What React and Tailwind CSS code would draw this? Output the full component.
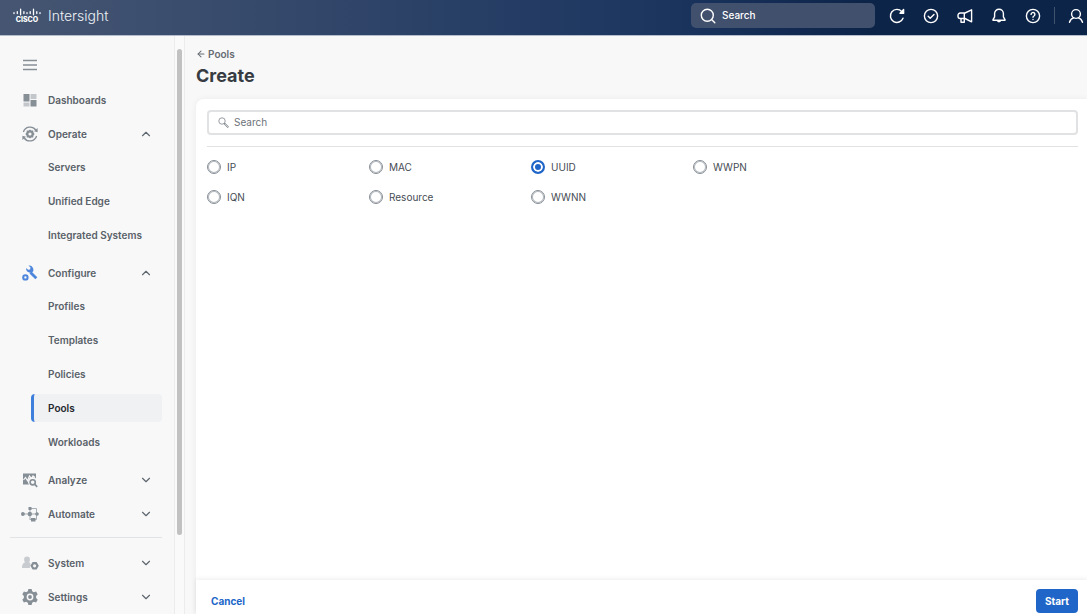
import { useState } from 'react';
import { ArrowLeft, ChevronDown, ChevronUp } from 'lucide-react';

const GEAR =
  'M8.4 1h3.2l.6 2.3 1.6.9 2.3-.7 1.6 2.8-1.6 1.7v2l1.6 1.7-1.6 2.8-2.3-.7-1.6.9-.6 2.3H8.4l-.6-2.3-1.6-.9-2.3.7-1.6-2.8L3.9 10V8L2.3 6.3l1.6-2.8 2.3.7 1.6-.9z';

function Logo() {
  return (
    <span className="flex w-7 flex-col items-center text-white">
      <svg viewBox="0 0 28 8" className="h-2 w-7" stroke="currentColor" strokeWidth="1.3" strokeLinecap="round">
        <path d="M1 4.6v1M4.3 3.6v2M7.6 1.2v5.6M10.9 3.6v2M14 4.6v1M17.2 3.6v2M20.5 1.2v5.6M23.8 3.6v2M27 4.6v1" />
      </svg>
      <span className="text-[7px] leading-[7px] font-extrabold">CISCO</span>
    </span>
  );
}

function HeaderIcon({ children }) {
  return (
    <svg viewBox="0 0 16 16" className="size-4" fill="none" stroke="currentColor" strokeWidth="1.4" strokeLinecap="round" strokeLinejoin="round">
      {children}
    </svg>
  );
}

const headerActions = [
  {
    label: 'Refresh',
    icon: (
      <>
        <path d="M14 10.2A6.5 6.5 0 1 1 12.8 3.6L14.5 5" />
        <path d="M14.6 1.6v3.6H11z" fill="currentColor" />
      </>
    ),
  },
  {
    label: 'Status',
    icon: (
      <>
        <circle cx="8" cy="8" r="6.6" />
        <path d="M5.2 8.2l2 2 3.8-3.8" />
      </>
    ),
  },
  {
    label: 'Announcements',
    icon: (
      <path d="M14.6 1.8v12L8 10.5H3.2A2.200 2.200 0 0 1 1 8.300V7.200A2.200 2.200 0 0 1 3.200 5H8zM7.300 5v5.500M4 10.600v3.700h3.300v-3.700" />
    ),
  },
  {
    label: 'Notifications',
    icon: (
      <path d="M8 1.2a4.4 4.4 0 0 0-4.4 4.4v3.2L2 11.6v.6h12v-.6l-1.6-2.8V5.6A4.4 4.4 0 0 0 8 1.2zM6.2 12.4a1.9 1.9 0 0 0 3.6 0" />
    ),
  },
  {
    label: 'Help',
    icon: (
      <>
        <circle cx="8" cy="8" r="6.6" />
        <path d="M6.1 6.4a1.9 1.9 0 1 1 2.9 1.6c-.7.4-1 .7-1 1.3M8 11.4v.1" />
      </>
    ),
  },
];

function NavIcon({ name }) {
  switch (name) {
    case 'dashboards':
      return (
        <svg viewBox="0 0 18 18" className="size-[18px]">
          <path d="M2.500 3h6v7.500h-6zM9.500 9h6v6.500h-6z" fill="#868e96" />
          <path d="M9.500 3h6v5h-6zM2.500 11.500h6v4h-6z" fill="#c3c7cc" />
        </svg>
      );
    case 'operate':
      return (
        <svg viewBox="0 0 18 18" className="size-[18px]" fill="none">
          <path d="M2.400 7A7 7 0 0 1 14.800 5M15.600 11A7 7 0 0 1 3.200 13" stroke="#868e96" strokeWidth="1.3" />
          <path d="M16.600 3v4.200l-3.600-1zM1.400 15v-4.200l3.600 1z" fill="#868e96" />
          <path d="M9 4.400l1.300 1.200 1.900-.2.200 1.900L13.600 9l-1.200 1.700-.2 1.900-1.900-.2L9 13.600l-1.300-1.200-1.900.2-.2-1.900L4.400 9l1.200-1.700.2-1.900 1.900.2z" fill="#868e96" />
          <circle cx="9" cy="9" r="1.600" fill="#f8f8f8" />
        </svg>
      );
    case 'configure':
      return (
        <svg viewBox="0 0 18 18" className="size-[18px]" fill="none" stroke="#4d86dc">
          <path d="M9.5 8.500l5.800 5.800" strokeWidth="2.800" />
          <path d="M5 4l2.200 1.800 1.900-.4.400-1.900L7.500 1.500a4.400 4.400 0 0 1 4.600 6 4.200 4.200 0 0 1-6.800-1.500z" fill="#4d86dc" stroke="none" />
          <circle cx="4.400" cy="13.400" r="2.200" strokeWidth="2" />
        </svg>
      );
    case 'analyze':
      return (
        <svg viewBox="0 0 18 18" className="size-[18px]" fill="none">
          <path d="M2 2.500h13v5A4.600 4.600 0 0 0 8 13.500H2z" fill="#868e96" />
          <path d="M2.500 9l2-2.500 2 3.200 2-4.700 2 2.800L12 5l2 1.500" stroke="#f8f8f8" strokeWidth="1.200" />
          <circle cx="11.700" cy="11.300" r="2.600" stroke="#868e96" strokeWidth="1.600" />
          <path d="M13.600 13.200l2.600 2.600" stroke="#868e96" strokeWidth="1.700" />
        </svg>
      );
    case 'automate':
      return (
        <svg viewBox="0 0 18 18" className="size-[18px]" fill="none">
          <path d="M2 9h14M9 3v12M9 3.500h6.500v11H9" stroke="#a9afb5" />
          <path d="M7.500 2h3v3h-3zM10 13h4.500v3.500H10z" fill="#868e96" />
          <circle cx="1.900" cy="9" r="1.900" fill="#868e96" />
          <circle cx="8.800" cy="9" r="2.200" fill="#868e96" />
          <circle cx="16" cy="9" r="1.800" fill="#868e96" />
        </svg>
      );
    case 'system':
      return (
        <svg viewBox="0 0 18 18" className="size-[18px]">
          <path d="M6 2.500a2.900 2.900 0 0 1 2.900 3c0 1.300-.4 2.100-.9 2.700 1 .4 1.500 1 1.500 2L8.800 14H1c0-3 .4-4.800 3-5.800-.5-.6-.9-1.400-.9-2.700A2.900 2.900 0 0 1 6 2.500z" fill="#c8ccd0" />
          <path d="M11.600 8h4l2.200 3.800-2.200 3.800h-4l-2.200-3.800z" fill="#868e96" />
          <circle cx="13.600" cy="11.800" r="1.600" fill="#f8f8f8" />
        </svg>
      );
    default:
      return (
        <svg viewBox="1 0 18 18" className="size-[18px]">
          <path d={GEAR} fill="#868e96" />
          <circle cx="10" cy="9" r="3.400" fill="#f8f8f8" />
          <circle cx="10" cy="9" r="1.900" fill="#868e96" />
        </svg>
      );
  }
}

const mainNav = [
  { label: 'Dashboards', icon: 'dashboards' },
  { label: 'Operate', icon: 'operate', children: ['Servers', 'Unified Edge', 'Integrated Systems'] },
  { label: 'Configure', icon: 'configure', children: ['Profiles', 'Templates', 'Policies', 'Pools', 'Workloads'] },
  { label: 'Analyze', icon: 'analyze', children: [] },
  { label: 'Automate', icon: 'automate', children: [] },
];

const adminNav = [
  { label: 'System', icon: 'system', children: [] },
  { label: 'Settings', icon: 'settings', children: [] },
];

function NavGroup({ item }) {
  const open = item.children && item.children.length > 0;
  const Chevron = open ? ChevronUp : ChevronDown;

  return (
    <li>
      <button type="button" className="flex h-[34px] w-full items-center pr-[9px] pl-[11px] text-left">
        <NavIcon name={item.icon} />
        <span className="ml-[9px] flex-1">{item.label}</span>
        {item.children && <Chevron className="size-[14px] text-[#5f676f]" strokeWidth={2} />}
      </button>
      {open && (
        <ul className="-mt-px pb-1 pl-[21px]">
          {item.children.map((child) => (
            <li key={child} className="flex h-[34px] items-center">
              <a
                href="#"
                className={
                  child === 'Pools'
                    ? 'flex h-7 w-full items-center rounded border-l-3 border-[#3f7fdc] bg-[#f0f1f3] pl-[14px] text-[#23282e]'
                    : 'flex h-7 w-full items-center pl-[17px]'
                }
              >
                {child}
              </a>
            </li>
          ))}
        </ul>
      )}
    </li>
  );
}

const poolTypes = ['IP', 'IQN', 'MAC', 'Resource', 'UUID', 'WWNN', 'WWPN'];

export default function App() {
  const [selected, setSelected] = useState('UUID');
  const [search, setSearch] = useState('');

  return (
    <div className="flex h-screen flex-col overflow-hidden bg-[#f8f8f8] font-['Inter',sans-serif] text-[10px] text-[#464c54]">
      <header className="flex h-[36px] shrink-0 items-center border-b border-[#b4bdcc] bg-linear-to-r from-[#465672] via-[#1c3660] via-60% to-[#0d2449] to-80% pr-[3px] pb-1 pl-[13px] text-white">
        <Logo />
        <span className="ml-[7px] text-[14px] font-light text-[#eef1f5]">Intersight</span>
        <label className="ml-auto flex h-[25px] w-[184px] items-center rounded-[5px] bg-[#41506d] pl-[9px]">
          <HeaderIcon>
            <circle cx="7.3" cy="7.3" r="6" />
            <path d="M11.8 11.8l3 3" />
          </HeaderIcon>
          <input
            type="text"
            aria-label="Search Intersight"
            placeholder="Search"
            className="ml-[6px] w-32 bg-transparent font-medium outline-none placeholder:text-white"
          />
        </label>
        <div className="ml-[14px] flex items-center gap-[18px]">
          {headerActions.map((action) => (
            <button key={action.label} type="button" aria-label={action.label}>
              <HeaderIcon>{action.icon}</HeaderIcon>
            </button>
          ))}
        </div>
        <span className="mx-[13px] h-[17px] w-px bg-[#42536f]" />
        <button type="button" aria-label="Account">
          <HeaderIcon>
            <circle cx="8" cy="6" r="4.4" />
            <path d="M1.500 14.300c.8-2.600 2.300-4 4.300-4.500M14.500 14.300c-.8-2.600-2.300-4-4.300-4.500" />
          </HeaderIcon>
        </button>
      </header>

      <div className="flex min-h-0 flex-1">
        <nav className="w-[174px] shrink-0 overflow-hidden pt-5 pr-3 pl-[10px] font-semibold text-[#596169]">
          <button type="button" aria-label="Toggle menu" className="mb-2 ml-[13px] block">
            <svg viewBox="0 0 14 19" className="h-[19px] w-[14px]" stroke="#868e96" strokeWidth="1.5">
              <path d="M0 4.500h14M0 9h14M0 13.500h14" />
            </svg>
          </button>
          <ul>
            {mainNav.map((item) => (
              <NavGroup key={item.label} item={item} />
            ))}
          </ul>
          <hr className="mt-[6px] mb-2 border-[#e1e3e5]" />
          <ul>
            {adminNav.map((item) => (
              <NavGroup key={item.label} item={item} />
            ))}
          </ul>
        </nav>

        <div className="w-[11px] shrink-0 border-x border-[#ececec] bg-[#fafafa] px-[2px] pt-[13px]">
          <div className="h-[86%] w-[5px] rounded-full bg-[#c1c1c1]" />
        </div>

        <main className="flex min-w-0 flex-1 flex-col pl-[11px]">
          <a href="#" className="mt-[11px] flex h-[14px] items-center gap-[2px] font-semibold text-[#656b73]">
            <ArrowLeft className="size-[10px]" strokeWidth={2.5} />
            Pools
          </a>
          <h1 className="mt-1 text-[18px] leading-[22px] font-bold text-[#373c42]">Create</h1>

          <section className="mt-3 flex min-h-0 flex-1 flex-col rounded-tl-lg bg-white shadow-[0_0_6px_rgba(0,0,0,0.06)]">
            <div className="flex-1 pt-[11px] pr-[9px] pl-[11px]">
              <label className="flex h-[25px] items-center rounded border-2 border-[#e1e2e3] pl-[9px]">
                <svg viewBox="0 0 11 11" className="size-[11px]" fill="none" stroke="#7d838a">
                  <circle cx="4" cy="4" r="3.2" strokeWidth=".8" />
                  <path d="M6.3 6.3l4 4" strokeWidth="1.8" />
                  <path d="M7 7l3 3" stroke="#ffffff" strokeWidth=".6" />
                </svg>
                <input
                  type="text"
                  aria-label="Search pools"
                  placeholder="Search"
                  value={search}
                  onChange={(e) => setSearch(e.target.value)}
                  className="ml-[5px] flex-1 bg-transparent outline-none placeholder:text-[#6c7279]"
                />
              </label>
              <hr className="mt-[11px] border-[#e1e2e3]" />
              <fieldset className="mt-[5px] grid auto-cols-[162px] grid-flow-col grid-rows-[30px_30px]">
                {poolTypes.map((type) => (
                  <label key={type} className="flex items-center gap-[6px]">
                    <input
                      type="radio"
                      name="pool-type"
                      value={type}
                      checked={selected === type}
                      onChange={() => setSelected(type)}
                      className="size-[14px] appearance-none rounded-full border border-[#868e96] bg-white ring-1 ring-[#868e96]/60 ring-inset checked:border-2 checked:border-[#2066c8] checked:bg-[#2066c8] checked:shadow-[inset_0_0_0_2px_white] checked:ring-0"
                    />
                    {type}
                  </label>
                ))}
              </fieldset>
            </div>

            <footer className="flex h-[34px] items-end justify-between pr-[9px] pb-px pl-[15px] font-bold shadow-[0_-1px_5px_rgba(0,0,0,0.08)]">
              <button type="button" className="h-6 text-[#2066c8]">
                Cancel
              </button>
              <button type="button" className="h-6 w-[42px] rounded bg-[#2066c8] text-white">
                Start
              </button>
            </footer>
          </section>
        </main>
      </div>
    </div>
  );
}
